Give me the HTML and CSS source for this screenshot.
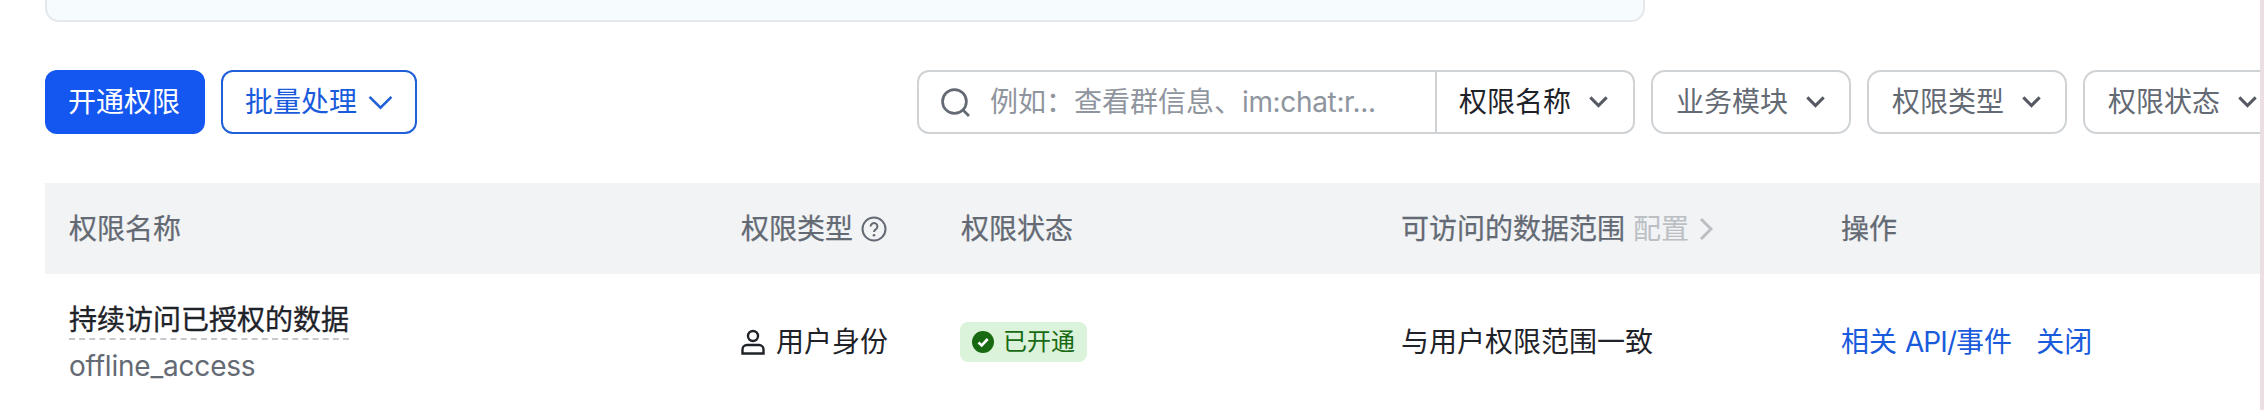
FILE: index.html
```html
<!DOCTYPE html>
<html lang="zh-CN">
<head>
<meta charset="utf-8">
<title>权限管理</title>
<link rel="stylesheet" href="styles.css">
</head>
<body>
<div class="page">
  <div class="notice"></div>
  <div class="toolbar">
    <div class="actions">
      <button class="btn btn-primary">开通权限</button>
      <button class="btn btn-outline">批量处理
        <svg class="chev-lg" viewBox="0 0 24 14"><path d="M1.500 1.500 12 12 22.500 1.500"/></svg>
      </button>
    </div>
    <div class="filters">
      <div class="search">
        <div class="search-input">
          <svg class="search-icon" viewBox="0 0 28 28"><circle cx="13" cy="13" r="11.500"/><path d="M21 21l6 6"/></svg>
          <span class="placeholder">例如：查看群信息、<span class="latin">im:chat:r...</span></span>
        </div>
        <div class="search-select"><span>权限名称</span><svg class="chev" viewBox="0 0 18 12"><path d="M2 2l7 7 7-7"/></svg></div>
      </div>
      <div class="filter"><span>业务模块</span><svg class="chev" viewBox="0 0 18 12"><path d="M2 2l7 7 7-7"/></svg></div>
      <div class="filter"><span>权限类型</span><svg class="chev" viewBox="0 0 18 12"><path d="M2 2l7 7 7-7"/></svg></div>
      <div class="filter"><span>权限状态</span><svg class="chev" viewBox="0 0 18 12"><path d="M2 2l7 7 7-7"/></svg></div>
    </div>
  </div>
  <div class="table">
    <div class="row head">
      <div class="cell">权限名称</div>
      <div class="cell"><span>权限类型</span>
        <svg class="help" viewBox="0 0 26 26"><circle cx="13" cy="13" r="11.500"/><path d="M9.600 10.400a3.400 3.400 0 1 1 5.400 2.800c-1.200.8-2 1.400-2 2.800"/><circle class="dot" cx="13" cy="19.200" r="1.300"/></svg>
      </div>
      <div class="cell">权限状态</div>
      <div class="cell"><span>可访问的数据范围</span><span class="config">配置<svg class="chev-r" viewBox="0 0 14 24"><path d="M2 2l10 10L2 22"/></svg></span></div>
      <div class="cell">操作</div>
    </div>
    <div class="row body">
      <div class="cell name">
        <span class="title">持续访问已授权的数据</span>
        <span class="code">offline_access</span>
      </div>
      <div class="cell type">
        <svg class="user" viewBox="0 0 24 26"><circle cx="12" cy="7" r="5"/><path d="M6 16h12a4.500 4.500 0 0 1 4.500 4.500V24.500H1.500V20.500A4.500 4.500 0 0 1 6 16z"/></svg><span>用户身份</span>
      </div>
      <div class="cell">
        <span class="tag">
          <svg class="ok" viewBox="0 0 22 22"><circle cx="11" cy="11" r="11"/><path d="M6.500 11.500l3.200 3 6-6.500"/></svg><span>已开通</span>
        </span>
      </div>
      <div class="cell">与用户权限范围一致</div>
      <div class="cell links"><a>相关 <span class="latin-api">API/</span>事件</a><a>关闭</a></div>
    </div>
  </div>
</div>
<div class="edge"></div>
</body>
</html>
```
FILE: styles.css
```css
* { box-sizing: border-box; }
html, body { margin: 0; padding: 0; height: 100%; overflow: hidden; background: #fff; }
body {
  display: flex;
  font-family: Inter, "Noto Sans CJK SC", sans-serif;
  font-size: 28px;
  line-height: 40px;
  color: #1f2329;
}
.page { width: 2260px; height: 410px; flex: none; padding-left: 45px; overflow: hidden; }
.edge { flex: 1; background: #ecdfe3; }
.notice {
  width: 1600px;
  height: 22px;
  background: #f6fbfe;
  border: 2px solid #e4e8ec;
  border-top: 0;
  border-radius: 0 0 14px 14px;
}
.toolbar { display: flex; justify-content: space-between; margin-top: 48px; height: 64px; }
.actions { display: flex; gap: 16px; }
.btn {
  height: 64px;
  border-radius: 12px;
  font: inherit;
  display: flex;
  align-items: center;
  white-space: nowrap;
}
.btn-primary { width: 160px; padding: 0 0 0 23px; background: #1456f0; color: #fff; border: 0; }
.btn-outline { width: 196px; padding: 0 0 0 22px; gap: 11px; background: #fff; color: #1a5bdc; border: 2px solid #1f5fd8; }
.chev-lg { width: 25px; height: 15px; fill: none; stroke: #1f5fd8; stroke-width: 2.400; }
.filters { display: flex; gap: 16px; width: 1343px; flex: none; overflow: hidden; }
.search {
  display: flex;
  width: 718px;
  height: 64px;
  flex: none;
  border: 2px solid #d0d3d6;
  border-radius: 12px;
}
.search-input { width: 518px; display: flex; align-items: center; padding-left: 22px; border-right: 2px solid #d0d3d6; }
.search-icon { width: 29px; height: 29px; fill: none; stroke: #646a73; stroke-width: 2.600; flex: none; }
.placeholder { margin-left: 20px; color: #8f959e; white-space: nowrap; }
.latin { letter-spacing: -0.35px; }
.latin-api { letter-spacing: -0.9px; }
.search-select { flex: 1; display: flex; align-items: center; padding-left: 22px; gap: 17px; color: #1f2329; }
.filter {
  width: 200px;
  height: 64px;
  flex: none;
  display: flex;
  align-items: center;
  padding-left: 23px;
  gap: 17px;
  border: 2px solid #d0d3d6;
  border-radius: 14px;
  color: #646a73;
}
.filter:last-child { width: 210px; }
.chev { width: 21px; height: 14px; fill: none; stroke: #555a62; stroke-width: 2.600; flex: none; }
.table { margin-top: 49px; width: 2215px; }
.row { display: grid; grid-template-columns: 671px 220px 440px 440px 1fr; }
.cell { padding-left: 25px; display: flex; align-items: center; white-space: nowrap; }
.row .cell:first-child { padding-left: 24px; }
.head { height: 91px; background: #f1f3f5; color: #646a73; -webkit-text-stroke: 0.25px #646a73; }
.help { width: 26px; height: 26px; margin-left: 8px; fill: none; stroke: #646a73; stroke-width: 2; }
.help .dot { fill: #646a73; stroke: none; }
.config { color: #bbbfc4; display: inline-flex; align-items: center; margin-left: 8px; -webkit-text-stroke: 0; }
.chev-r { width: 14px; height: 24px; margin-left: 10px; fill: none; stroke: #bbbfc4; stroke-width: 3; }
.body { height: 136px; }
.name { flex-direction: column; align-items: flex-start; justify-content: flex-start; padding-top: 29px; }
.title { line-height: 35px; border-bottom: 2px dashed #c4c7cb; -webkit-text-stroke: 0.35px #1f2329; }
.code { margin-top: 7px; line-height: 38px; color: #646a73; letter-spacing: -0.2px; }
.user { width: 24px; height: 26px; margin-right: 11px; fill: none; stroke: #1f2329; stroke-width: 2.400; flex: none; }
.tag {
  display: inline-flex;
  align-items: center;
  height: 40px;
  padding: 0 12px;
  gap: 9px;
  background: #dbf3da;
  border-radius: 8px;
  color: #186a12;
  font-size: 24px;
  margin-left: -1px;
}
.ok { width: 22px; height: 22px; }
.ok circle { fill: #186a12; }
.ok path { fill: none; stroke: #fff; stroke-width: 2.600; }
.links a { color: #1a5bdc; margin-right: 24px; }
```
